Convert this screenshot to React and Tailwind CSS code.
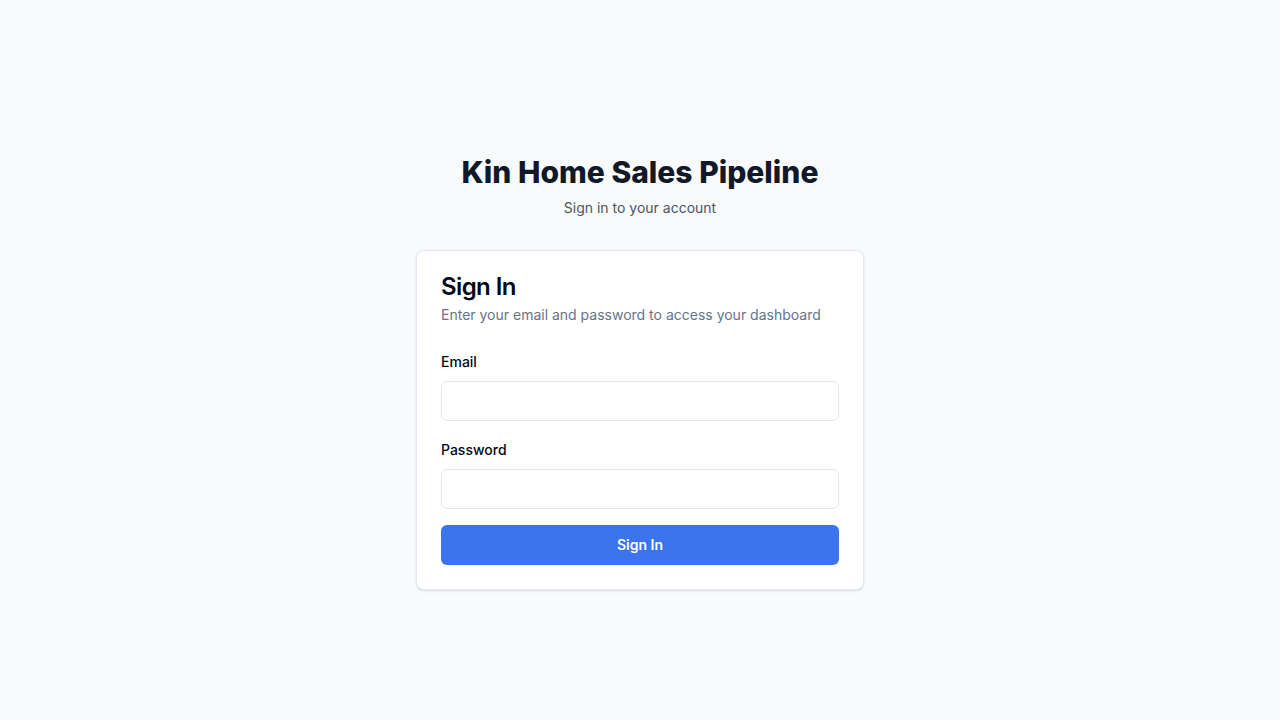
export default function App() {
  return (
    <div
      className="min-h-screen bg-[#f8fafc] flex items-center justify-center pt-6"
      style={{ fontFamily: 'Inter, "Noto Sans", sans-serif' }}
    >
      <div className="w-[448px]">
        <div className="text-center">
          <h1 className="text-3xl font-extrabold text-[#111827]">Kin Home Sales Pipeline</h1>
          <p className="mt-2 text-sm text-[#4b5563]">Sign in to your account</p>
        </div>

        <div className="mt-8 bg-white border border-[#e2e8f0] rounded-lg shadow-sm">
          <div className="p-6 flex flex-col gap-1.5">
            <h2 className="text-2xl font-semibold leading-none tracking-tight text-[#020817]">Sign In</h2>
            <p className="text-sm text-[#64748b]">Enter your email and password to access your dashboard</p>
          </div>

          <form className="px-6 pb-6 pt-[3px]" onSubmit={e => e.preventDefault()}>
            <div>
              <label htmlFor="email" className="block text-sm font-medium text-[#020817]">Email</label>
              <input
                id="email"
                type="email"
                className="mt-[9px] h-10 w-full rounded-md border border-[#e2e8f0] bg-white px-3 text-sm outline-none"
              />
            </div>
            <div className="mt-[19px]">
              <label htmlFor="password" className="block text-sm font-medium text-[#020817]">Password</label>
              <input
                id="password"
                type="password"
                className="mt-[9px] h-10 w-full rounded-md border border-[#e2e8f0] bg-white px-3 text-sm outline-none"
              />
            </div>
            <button
              type="submit"
              className="mt-4 h-10 w-full rounded-md bg-[#3b74ec] text-sm font-semibold text-white"
            >
              Sign In
            </button>
          </form>
        </div>
      </div>
    </div>
  )
}
